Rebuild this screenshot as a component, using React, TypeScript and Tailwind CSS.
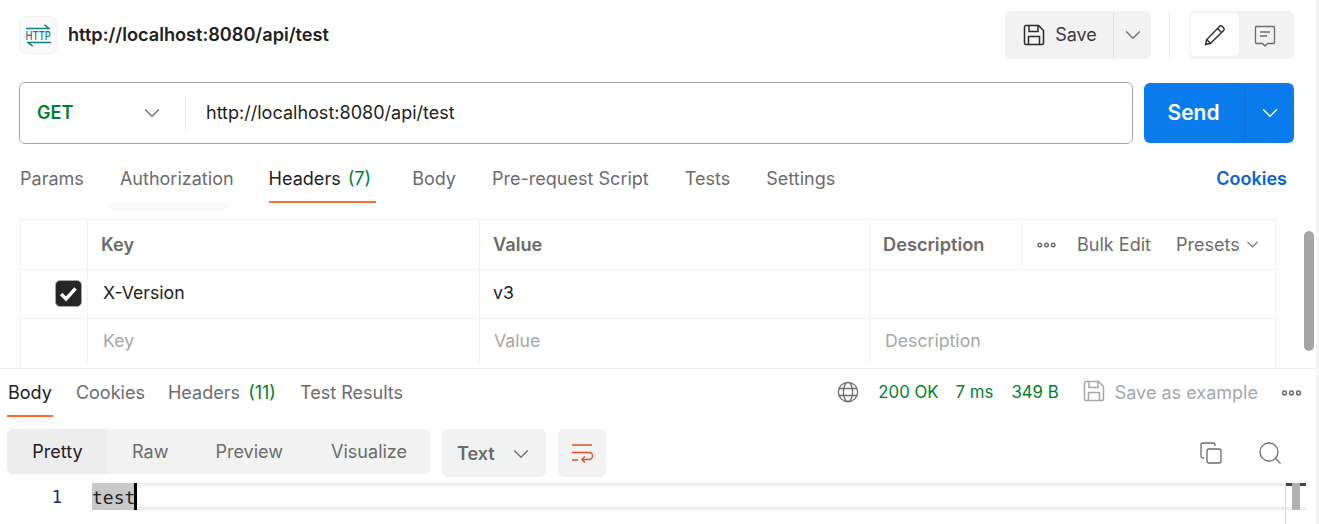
import { ChevronDown } from "lucide-react";

const sans = "font-['Inter',sans-serif]";

function SaveIcon({ className }: { className?: string }) {
  return (
    <svg viewBox="0 0 22 22" fill="none" stroke="currentColor" strokeWidth="1.5" className={className}>
      <path d="M1.5 3A1.5 1.5 0 0 1 3 1.5h12.5l5 5V19a1.5 1.5 0 0 1-1.5 1.5H3A1.5 1.5 0 0 1 1.5 19Z" />
      <path d="M6 1.5v6h9v-6" />
      <path d="M5.5 20.5v-8h11v8" />
    </svg>
  );
}

function Dots({ className }: { className?: string }) {
  return (
    <svg viewBox="0 0 20 6" fill="none" stroke="currentColor" strokeWidth="1.5" className={className}>
      <circle cx="3" cy="3" r="1.9" />
      <circle cx="10" cy="3" r="1.9" />
      <circle cx="17" cy="3" r="1.9" />
    </svg>
  );
}

function HeaderCell({ label, className }: { label: string; className?: string }) {
  return <div className={`flex items-center border-r border-[#f2f2f2] pl-[13px] pt-[1px] text-[18.2px] font-semibold text-[#6b6b6b] ${className ?? ""}`}>{label}</div>;
}

export default function App() {
  return (
    <div className={`${sans} h-[524px] w-[1319px] overflow-hidden bg-[#f6f6f6] text-[18.05px] text-[#212121]`}>
      <div className="h-[524px] w-[1316px] bg-white">
        {/* Request */}
        <section className="relative h-[369px] border-b border-[#ededed]">
          <div className="flex h-[82px] items-start pl-[19px] pr-[22px] pt-[11px]">
            <div className="mt-[5px] flex h-[38px] w-[38px] flex-col items-center justify-center rounded-[6px] border border-[#f2f2f2] bg-[#f9f9f9] text-[#10808c]">
              <svg viewBox="0 0 26 6" className="h-[6px] w-[25px]" fill="none" stroke="currentColor" strokeWidth="1.5">
                <path d="M0 4.5h25M19 0.8l4.5 3.4" />
              </svg>
              <span className="h-[11px] scale-x-[0.78] text-[12px] font-medium leading-[11px]">HTTP</span>
              <svg viewBox="0 0 26 6" className="h-[6px] w-[25px]" fill="none" stroke="currentColor" strokeWidth="1.5">
                <path d="M1 1.5h25M7 5.2L2.5 1.8" />
              </svg>
            </div>
            <span className="ml-[11px] mt-[10px] text-[18.15px] font-semibold leading-[26px] text-[#212121]">http://localhost:8080/api/test</span>
            <div className="ml-auto flex h-[48px] w-[146px] rounded-[6px] bg-[#f2f2f2]">
              <div className="flex w-[109px] items-center justify-center gap-[10px] border-r border-[#e2e2e2] pl-[2px]">
                <SaveIcon className="h-[22px] w-[22px] text-[#2b2b2b]" />
                <span className="text-[#3a3a3a]">Save</span>
              </div>
              <div className="flex flex-1 items-center justify-center">
                <ChevronDown className="h-[26px] w-[26px] text-[#6b6b6b]" strokeWidth={1.1} />
              </div>
            </div>
            <div className="ml-[18px] h-[48px] w-px bg-[#ededed]" />
            <div className="ml-[19px] flex h-[48px] w-[105px] rounded-[6px] bg-[#f2f2f2] pl-[1px] pt-[2px]">
              <div className="flex h-[43px] w-[49px] items-center justify-center rounded-[5px] bg-white">
                <svg viewBox="0 0 22 22" className="h-[22px] w-[22px] text-[#2b2b2b]" fill="none" stroke="currentColor" strokeWidth="1.4">
                  <path d="M1.5 20.5l1.2-5L15.5 2.4a2 2 0 0 1 2.8 0l1.3 1.3a2 2 0 0 1 0 2.8L6.6 19.3Z" />
                  <path d="M13.5 4.5l4 4M2.7 15.5l3.9 3.8" />
                </svg>
              </div>
              <div className="flex flex-1 items-center justify-center pr-[3px]">
                <svg viewBox="0 0 22 22" className="h-[22px] w-[22px] text-[#6b6b6b]" fill="none" stroke="currentColor" strokeWidth="1.3">
                  <path d="M2.5 1.5h17a1 1 0 0 1 1 1v15a1 1 0 0 1-1 1h-6l-2.5 2.5-2.5-2.5h-6a1 1 0 0 1-1-1v-15a1 1 0 0 1 1-1Z" />
                  <path d="M6 7h10M6 11h7" />
                </svg>
              </div>
            </div>
          </div>

          {/* URL bar */}
          <div className="flex h-[62px] gap-[11px] pl-[19px] pr-[22px]">
            <div className="flex h-[62px] flex-1 items-center rounded-[6px] border border-[#a6a6a6] bg-white">
              <div className="flex h-[36px] w-[166px] items-center justify-between border-r border-[#ededed] pl-[17px] pr-[20px]">
                <span className="font-semibold text-[#007f31]">GET</span>
                <ChevronDown className="h-[26px] w-[26px] text-[#6b6b6b]" strokeWidth={1.1} />
              </div>
              <span className="pl-[20px] text-[#212121]">http://localhost:8080/api/test</span>
            </div>
            <div className="mt-[1px] flex h-[60px] w-[150px] rounded-[6px] bg-[#097bed] text-white">
              <div className="flex w-[101px] items-center justify-center border-r border-[#0b6fd4] pr-[1px] text-[21px] font-semibold">Send</div>
              <div className="flex flex-1 items-center justify-center">
                <ChevronDown className="h-[26px] w-[26px]" strokeWidth={1.3} />
              </div>
            </div>
          </div>

          {/* Request tabs */}
          <div className="relative flex h-[58px] items-start pl-[20px] pr-[29px] pt-[21px] leading-[27px] text-[#6b6b6b]">
            <span>Params</span>
            <span className="ml-[36px]">Authorization</span>
            <span className="relative ml-[35px] text-[#212121]">
              Headers <span className="ml-[2px] text-[#007f31]">(7)</span>
              <span className="absolute -bottom-[11px] -right-[5px] left-0 h-[2px] bg-[#ff6c37]" />
            </span>
            <span className="ml-[41px]">Body</span>
            <span className="ml-[36px]">Pre-request Script</span>
            <span className="ml-[36px]">Tests</span>
            <span className="ml-[36px]">Settings</span>
            <span className="ml-auto font-semibold text-[#0b63cf]">Cookies</span>
            <div className="absolute left-[107px] top-[59px] h-[7px] w-[123px] rounded-b-[12px] bg-[#f9f9f9]" />
          </div>

          {/* Headers table */}
          <div className="ml-[20px] mt-[17px] w-[1256px] border-x border-t border-[#f2f2f2] text-[17.7px]">
            <div className="grid h-[50px] grid-cols-[67px_392px_390px_152px_1fr] border-b border-[#f2f2f2]">
              <div className="border-r border-[#f2f2f2]" />
              <HeaderCell label="Key" />
              <HeaderCell label="Value" />
              <HeaderCell label="Description" />
              <div className="flex items-center pl-[15px] text-[18.05px] text-[#6b6b6b]">
                <Dots className="h-[6px] w-[19px]" />
                <span className="ml-[21px]">Bulk Edit</span>
                <span className="ml-[25px]">Presets</span>
                <ChevronDown className="ml-[3px] h-[19px] w-[19px]" strokeWidth={1.5} />
              </div>
            </div>
            <div className="grid h-[49px] grid-cols-[67px_392px_390px_1fr] border-b border-[#f2f2f2]">
              <div className="flex items-center justify-end border-r border-[#f2f2f2] pb-[2px] pr-[5px]">
                <div className="flex h-[27px] w-[27px] items-center justify-center rounded-[5px] border border-[#a6a6a6] bg-[#262626]">
                  <svg viewBox="0 0 20 20" className="h-[21px] w-[21px]" fill="none" stroke="white" strokeWidth="3.2">
                    <path d="M3 10.5l4.7 4.7 9-10" />
                  </svg>
                </div>
              </div>
              <div className="flex items-center border-r border-[#f2f2f2] pb-[1px] pl-[15px]">X-Version</div>
              <div className="flex items-center border-r border-[#f2f2f2] pb-[1px] pl-[13px]">v3</div>
              <div />
            </div>
            <div className="grid h-[48px] grid-cols-[67px_392px_390px_1fr] pb-[3px] text-[#a6a6a6]">
              <div className="border-r border-[#f2f2f2]" />
              <div className="flex items-center border-r border-[#f2f2f2] pl-[15px]">Key</div>
              <div className="flex items-center border-r border-[#f2f2f2] pl-[14px]">Value</div>
              <div className="flex items-center pl-[15px]">Description</div>
            </div>
          </div>

          <div className="absolute left-[1304px] top-[231px] h-[120px] w-[10px] rounded-[5px] bg-[#a6a6a6]" />
        </section>

        {/* Response */}
        <section className="relative">
          <div className="flex h-[48px] items-start pl-[8px] pr-[14px] pt-[10px] leading-[27px] text-[#6b6b6b]">
            <span className="relative text-[#212121]">
              Body
              <span className="absolute -bottom-[11px] left-[-1px] right-[-1px] h-[2px] bg-[#ff6c37]" />
            </span>
            <span className="ml-[24px]">Cookies</span>
            <span className="ml-[23px]">Headers <span className="ml-[3px] text-[#007f31]">(11)</span></span>
            <span className="ml-[24px]">Test Results</span>
            <svg viewBox="0 0 22 22" className="ml-auto mt-[2px] h-[22px] w-[22px]" fill="none" stroke="#6b6b6b" strokeWidth="1.3">
              <circle cx="11" cy="11" r="9.7" />
              <ellipse cx="11" cy="11" rx="4.6" ry="9.7" />
              <path d="M2 7.5h18M2 14.5h18" />
            </svg>
            <span className="ml-[19px] text-[16.8px] text-[#007f31]">200 OK</span>
            <span className="ml-[17px] text-[16.8px] text-[#007f31]">7 ms</span>
            <span className="ml-[18px] text-[16.8px] text-[#007f31]">349 B</span>
            <SaveIcon className="ml-[24px] mt-[1px] h-[22px] w-[22px] text-[#a6a6a6]" />
            <span className="ml-[10px] text-[#a6a6a6]">Save as example</span>
            <Dots className="ml-[23px] mt-[11px] h-[6px] w-[21px]" />
          </div>

          <div className="flex h-[60px] items-start pl-[7px] pr-[35px] pt-[12px]">
            <div className="flex h-[45px] w-[423px] items-center rounded-[6px] bg-[#f2f2f2] text-[#6b6b6b]">
              <div className="flex h-full w-[100px] items-center justify-center rounded-l-[6px] bg-[#ededed] pl-[1px] text-[#212121]">Pretty</div>
              <span className="ml-[25px]">Raw</span>
              <span className="ml-[47px]">Preview</span>
              <span className="ml-[48px]">Visualize</span>
            </div>
            <div className="ml-[12px] flex h-[48px] w-[104px] items-center rounded-[6px] bg-[#f2f2f2] pl-[15px] pt-[2px] font-semibold text-[#6b6b6b]">
              Text
              <ChevronDown className="ml-[13px] h-[26px] w-[26px]" strokeWidth={1.1} />
            </div>
            <div className="ml-[12px] flex h-[48px] w-[48px] items-center justify-center rounded-[6px] bg-[#f2f2f2]">
              <svg viewBox="0 0 22 22" className="h-[22px] w-[22px]" fill="none" stroke="#d9512c" strokeWidth="1.4">
                <path d="M1 3h20M1 10.5h17a3 3 0 0 1 0 7h-7M1 18h6M14 14.5l-3 3 3 3" />
              </svg>
            </div>
            <svg viewBox="0 0 22 22" className="ml-auto mt-[13px] h-[22px] w-[22px]" fill="none" stroke="#6b6b6b" strokeWidth="1.3">
              <rect x="7" y="7" width="14" height="14" rx="2" />
              <path d="M4 16H3a2 2 0 0 1-2-2V3a2 2 0 0 1 2-2h10a2 2 0 0 1 2 2v1" />
            </svg>
            <svg viewBox="0 0 22 22" className="ml-[37px] mt-[13px] h-[22px] w-[22px]" fill="none" stroke="#6b6b6b" strokeWidth="1.3">
              <circle cx="10" cy="10" r="9" />
              <path d="M16.5 16.5l5 5" />
            </svg>
          </div>

          {/* Editor */}
          <div className="mt-[6px] mr-[10px] flex h-[27px] items-stretch">
            <div className="w-[92px] pr-[30px] pt-[1px] text-right font-['DejaVu_Sans_Mono',monospace] text-[17px] leading-[27px] text-[#1a237e]">1</div>
            <div className="relative flex-1 border-y-[3px] border-[#ededed]">
              <span className="absolute -top-[3px] left-0 flex h-[27px] w-[43px] items-center bg-[#c8c8c8] pt-[1px] font-['DejaVu_Sans_Mono',monospace] text-[18px] text-[#212121]">test</span>
              <span className="absolute -top-[3px] left-[42px] h-[27px] w-[3px] bg-black" />
              <span className="absolute -top-[3px] left-[1194px] h-[3px] w-[20px] bg-[#444444]" />
              <span className="absolute -top-[3px] left-[1200px] h-[27px] w-[8px] bg-[#b0b0b0]" />
              <span className="absolute -top-[3px] left-[1193px] h-[41px] w-px bg-[#d9d9d9]" />
            </div>
          </div>
        </section>
      </div>
    </div>
  );
}
